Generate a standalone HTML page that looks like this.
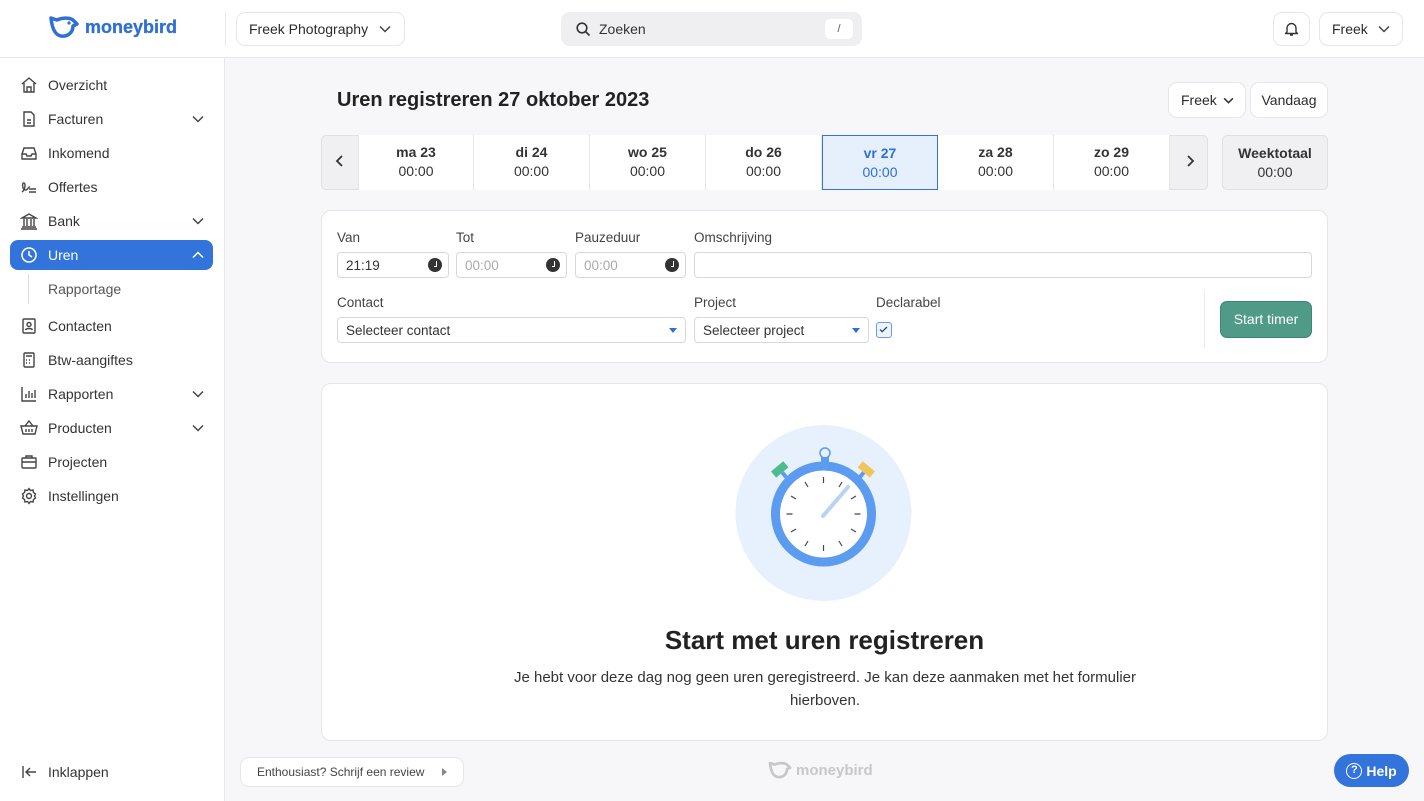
<!DOCTYPE html>
<html><head><meta charset="utf-8"><style>
*{box-sizing:border-box;margin:0;padding:0}
body{width:1424px;height:801px;overflow:hidden;font-family:"Liberation Sans",sans-serif;background:#f7f7f9;color:#2b2b2b;position:relative}
.a{position:absolute}
.hdr{left:0;top:0;width:1424px;height:58px;background:#fff;border-bottom:1px solid #e8e8ec}
.side{left:0;top:58px;width:225px;height:743px;background:#fff;border-right:1px solid #e8e8ec}
.btn{background:#fff;border:1px solid #e6e6ea;border-radius:9px;font-size:14px;display:flex;align-items:center}
.nav{left:10px;width:203px;height:30px;display:flex;align-items:center;font-size:14px;color:#333}
.nav svg{margin-left:10px;margin-right:10px}
.nav .ch{position:absolute;right:-1px}
.card{background:#fff;border:1px solid #e6e6ea;border-radius:10px}
.day{top:135px;height:55px;width:116px;background:#fff;border-right:1px solid #e6e6ea;text-align:center;font-size:14px;padding-top:9px;color:#333}
.day b{display:block;margin-bottom:3px}
.lbl{font-size:13.5px;color:#444}
.inp{height:26px;border:1px solid #d8d8dc;border-radius:4px;background:#fff;font-size:13.5px;padding:5px 8px;color:#333}
.ck{position:absolute;right:6px;top:5px;width:14px;height:14px;border-radius:50%;background:#333}
.ck:after{content:"";position:absolute;left:6px;top:3px;width:2px;height:5px;border-right:1.5px solid #fff;border-bottom:1.5px solid #fff}
.tri{position:absolute;right:8px;top:10px;width:0;height:0;border-left:4px solid transparent;border-right:4px solid transparent;border-top:5px solid #2f6fd6}
</style></head><body>
<div class="a hdr"></div>
<div class="a" style="left:49px;top:14px;display:flex;align-items:center">
<svg width="30" height="26" viewBox="0 0 30 26"><path d="M2 4 L8 6 C12 4 20 3 24 6 L28 10 L24 12 C24 19 18 23 12 22 C6 21 3 14 2 4Z" fill="none" stroke="#2f6fd6" stroke-width="3.5" stroke-linejoin="round"/><circle cx="20" cy="9" r="1.6" fill="#2f6fd6"/></svg>
<span style="color:#2f6fd6;font-weight:bold;font-size:18px;margin-left:6px;-webkit-text-stroke:.3px #2f6fd6">moneybird</span></div>
<div class="a" style="left:225px;top:12px;width:1px;height:34px;background:#e8e8ec"></div>
<div class="a btn" style="left:236px;top:12px;width:169px;height:34px;padding-left:12px">Freek Photography<svg style="position:absolute;right:13px" width="12" height="8" viewBox="0 0 12 8"><path d="M1 1.5l5 5 5-5" fill="none" stroke="#444" stroke-width="1.5"/></svg></div>
<div class="a" style="left:561px;top:12px;width:301px;height:34px;background:#efeff2;border-radius:9px;display:flex;align-items:center;font-size:14px;color:#333">
<svg style="margin:0 8px 0 15px" width="15" height="15" viewBox="0 0 15 15"><circle cx="6" cy="6" r="4.8" fill="none" stroke="#333" stroke-width="1.6"/><path d="M9.5 9.5l4 4" stroke="#333" stroke-width="1.6"/></svg>Zoeken
<span style="position:absolute;right:9px;top:7px;width:28px;height:20px;background:#fff;border-radius:5px;font-size:11px;text-align:center;line-height:20px;color:#555">/</span></div>
<div class="a btn" style="left:1273px;top:12px;width:37px;height:34px;justify-content:center"><svg width="15" height="16" viewBox="0 0 15 16"><path d="M3 11V7a4.5 4.5 0 019 0v4l1.5 1.5h-12z M6 14h3" fill="none" stroke="#333" stroke-width="1.4" stroke-linejoin="round"/></svg></div>
<div class="a btn" style="left:1319px;top:12px;width:84px;height:34px;padding-left:12px">Freek<svg style="position:absolute;right:12px" width="12" height="8" viewBox="0 0 12 8"><path d="M1 1.5l5 5 5-5" fill="none" stroke="#444" stroke-width="1.5"/></svg></div>

<div class="a side"></div>
<div class="a nav" style="top:70px"><svg width="18" height="18" viewBox="0 0 18 18" fill="none" stroke="#444" stroke-width="1.4"><path d="M2 8L9 2l7 6M4 7v9h10V7M7 16v-5h4v5"/></svg>Overzicht</div>
<div class="a nav" style="top:104px"><svg width="18" height="18" viewBox="0 0 18 18" fill="none" stroke="#444" stroke-width="1.4"><path d="M4 2h7l3 3v11H4zM7 10h4M7 13h4"/></svg>Facturen<svg class="ch" width="12" height="8" viewBox="0 0 12 8"><path d="M1 1.5l5 5 5-5" fill="none" stroke="#444" stroke-width="1.5"/></svg></div>
<div class="a nav" style="top:138px"><svg width="18" height="18" viewBox="0 0 18 18" fill="none" stroke="#444" stroke-width="1.4"><path d="M2 10l2-6h10l2 6v5H2zM2 10h4l1 2h4l1-2h4"/></svg>Inkomend</div>
<div class="a nav" style="top:172px"><svg width="18" height="18" viewBox="0 0 18 18" fill="none" stroke="#444" stroke-width="1.4"><path d="M2 14c3-2 4-8 2-9s-2 6 1 7 3-4 5-3M9 11h7M9 14h7"/></svg>Offertes</div>
<div class="a nav" style="top:206px"><svg width="18" height="18" viewBox="0 0 18 18" fill="none" stroke="#444" stroke-width="1.4"><path d="M2 6l7-4 7 4zM4 7v7M7 7v7M11 7v7M14 7v7M2 15h14M1 17h16"/></svg>Bank<svg class="ch" width="12" height="8" viewBox="0 0 12 8"><path d="M1 1.5l5 5 5-5" fill="none" stroke="#444" stroke-width="1.5"/></svg></div>
<div class="a nav" style="top:240px;background:#3273dc;border-radius:8px;color:#fff"><svg width="18" height="18" viewBox="0 0 18 18" fill="none" stroke="#fff" stroke-width="1.6"><circle cx="9" cy="9" r="7"/><path d="M9 5v4l3 2"/></svg>Uren<svg class="ch" width="12" height="8" viewBox="0 0 12 8"><path d="M1 6.5l5-5 5 5" fill="none" stroke="#fff" stroke-width="1.5"/></svg></div>
<div class="a" style="left:28px;top:274px;width:1px;height:30px;background:#ddd"></div>
<div class="a" style="left:48px;top:281px;font-size:14px;color:#555">Rapportage</div>
<div class="a nav" style="top:311px"><svg width="18" height="18" viewBox="0 0 18 18" fill="none" stroke="#444" stroke-width="1.4"><rect x="3" y="2" width="12" height="14" rx="1"/><circle cx="9" cy="7.5" r="2"/><path d="M5.5 13c1-2 6-2 7 0"/></svg>Contacten</div>
<div class="a nav" style="top:345px"><svg width="18" height="18" viewBox="0 0 18 18" fill="none" stroke="#444" stroke-width="1.4"><rect x="4" y="2" width="10" height="14" rx="1"/><path d="M6 5h6M6 9h1M9 9h1M6 12h1M9 12h1"/></svg>Btw-aangiftes</div>
<div class="a nav" style="top:379px"><svg width="18" height="18" viewBox="0 0 18 18" fill="none" stroke="#444" stroke-width="1.4"><path d="M2 2v14h14M6 13V9M9 13V6M12 13V8M15 13V5"/></svg>Rapporten<svg class="ch" width="12" height="8" viewBox="0 0 12 8"><path d="M1 1.5l5 5 5-5" fill="none" stroke="#444" stroke-width="1.5"/></svg></div>
<div class="a nav" style="top:413px"><svg width="18" height="18" viewBox="0 0 18 18" fill="none" stroke="#444" stroke-width="1.4"><path d="M1 7h16l-2 8H3zM5 7l4-5 4 5M6 10v3M9 10v3M12 10v3"/></svg>Producten<svg class="ch" width="12" height="8" viewBox="0 0 12 8"><path d="M1 1.5l5 5 5-5" fill="none" stroke="#444" stroke-width="1.5"/></svg></div>
<div class="a nav" style="top:447px"><svg width="18" height="18" viewBox="0 0 18 18" fill="none" stroke="#444" stroke-width="1.4"><rect x="2" y="5" width="14" height="10" rx="1"/><path d="M6 5V3h6v2M2 9h14"/></svg>Projecten</div>
<div class="a nav" style="top:481px"><svg width="18" height="18" viewBox="0 0 18 18" fill="none" stroke="#444" stroke-width="1.4"><circle cx="9" cy="9" r="2.5"/><path d="M9 1.5l1.5 2 2.5-.5.5 2.5 2 1.5-1 2 1 2-2 1.5-.5 2.5-2.5-.5L9 16.5l-1.5-2-2.5.5-.5-2.5-2-1.5 1-2-1-2 2-1.5.5-2.5 2.5.5z"/></svg>Instellingen</div>
<div class="a nav" style="top:757px"><svg width="18" height="18" viewBox="0 0 18 18" fill="none" stroke="#444" stroke-width="1.4"><path d="M3 3v12M16 9H6M10 5L6 9l4 4"/></svg>Inklappen</div>

<div class="a" style="left:337px;top:89px;font-size:20px;font-weight:bold;color:#222">Uren registreren 27 oktober 2023</div>
<div class="a btn" style="left:1168px;top:82px;width:78px;height:36px;padding-left:12px">Freek<svg style="position:absolute;right:11px" width="11" height="7" viewBox="0 0 12 8"><path d="M1 1.5l5 5 5-5" fill="none" stroke="#333" stroke-width="1.8"/></svg></div>
<div class="a btn" style="left:1250px;top:82px;width:78px;height:36px;justify-content:center">Vandaag</div>

<div class="a" style="left:321px;top:135px;width:887px;height:55px;border:1px solid #e0e0e4;border-radius:5px;overflow:hidden;background:#f0f0f3"></div>
<div class="a" style="left:334px;top:154px"><svg width="12" height="14" viewBox="0 0 12 14"><path d="M8 2L3 7l5 5" fill="none" stroke="#333" stroke-width="1.8"/></svg></div>
<div class="a" style="left:1184px;top:154px"><svg width="12" height="14" viewBox="0 0 12 14"><path d="M4 2l5 5-5 5" fill="none" stroke="#333" stroke-width="1.8"/></svg></div>
<div class="a day" style="left:358px;border-left:1px solid #e6e6ea"><b>ma 23</b>00:00</div>
<div class="a day" style="left:474px"><b>di 24</b>00:00</div>
<div class="a day" style="left:590px"><b>wo 25</b>00:00</div>
<div class="a day" style="left:706px"><b>do 26</b>00:00</div>
<div class="a day" style="left:822px;background:#e6f0fc;border:1px solid #3273dc;color:#2f6fd6"><b>vr 27</b>00:00</div>
<div class="a day" style="left:938px"><b>za 28</b>00:00</div>
<div class="a day" style="left:1054px"><b>zo 29</b>00:00</div>
<div class="a day" style="left:1222px;width:106px;background:#f0f0f3;border:1px solid #e0e0e4;border-radius:5px"><b>Weektotaal</b>00:00</div>

<div class="a card" style="left:321px;top:210px;width:1007px;height:153px"></div>
<div class="a lbl" style="left:337px;top:230px">Van</div>
<div class="a lbl" style="left:456px;top:230px">Tot</div>
<div class="a lbl" style="left:575px;top:230px">Pauzeduur</div>
<div class="a lbl" style="left:694px;top:230px">Omschrijving</div>
<div class="a inp" style="left:337px;top:252px;width:112px">21:19<span class="ck"></span></div>
<div class="a inp" style="left:456px;top:252px;width:111px;color:#aaa">00:00<span class="ck"></span></div>
<div class="a inp" style="left:575px;top:252px;width:111px;color:#aaa">00:00<span class="ck"></span></div>
<div class="a inp" style="left:694px;top:252px;width:618px"></div>
<div class="a lbl" style="left:337px;top:295px">Contact</div>
<div class="a lbl" style="left:694px;top:295px">Project</div>
<div class="a lbl" style="left:876px;top:295px">Declarabel</div>
<div class="a inp" style="left:337px;top:317px;width:349px">Selecteer contact<span class="tri"></span></div>
<div class="a inp" style="left:694px;top:317px;width:175px">Selecteer project<span class="tri"></span></div>
<div class="a" style="left:876px;top:322px;width:16px;height:16px;border:1.5px solid #6b9be6;border-radius:3px;background:#eef4fd"><svg width="13" height="13" viewBox="0 0 13 13" style="position:absolute;left:0;top:0"><path d="M3 6.5l2.2 2.2L10 4" fill="none" stroke="#2b4a7a" stroke-width="1.3"/></svg></div>
<div class="a" style="left:1204px;top:290px;width:1px;height:58px;background:#ececef"></div>
<div class="a" style="left:1220px;top:301px;width:92px;height:37px;background:#4f9b87;border:1px solid #3f8674;border-radius:7px;color:#fff;font-size:14px;text-align:center;line-height:35px">Start timer</div>

<div class="a card" style="left:321px;top:383px;width:1007px;height:358px"></div>
<svg class="a" style="left:735px;top:425px" width="177" height="176" viewBox="0 0 177 176">
<circle cx="88.5" cy="88" r="88" fill="#e6f1fd"/>
<circle cx="90" cy="28" r="5" fill="none" stroke="#5b9bf0" stroke-width="1.5"/>
<rect x="86" y="32" width="8" height="8" fill="#5b9bf0"/>
<g transform="rotate(-40 46 46)"><rect x="38" y="40" width="16" height="8" fill="#4cbb8e"/><rect x="44" y="48" width="4" height="6" fill="#5b9bf0"/></g>
<g transform="rotate(40 130 46)"><rect x="122" y="40" width="16" height="8" fill="#f2c45a"/><rect x="128" y="48" width="4" height="6" fill="#5b9bf0"/></g>
<circle cx="88.5" cy="89" r="48" fill="#fff" stroke="#5b9bf0" stroke-width="9"/>
<g stroke="#445" stroke-width="1.2">
<path d="M88.5 52v6M88.5 120v6M51.5 89h6M119.5 89h6M70 57l3 5M104 116l3 5M107 57l-3 5M73 116l-3 5M56 71l5 3M116 104l5 3M56 107l5-3M116 74l5-3"/></g>
<path d="M88 91L113 62" stroke="#b7d3f7" stroke-width="4" stroke-linecap="round"/>
</svg>
<div class="a" style="left:321px;top:625px;width:1007px;text-align:center;font-size:26px;font-weight:bold;color:#222">Start met uren registreren</div>
<div class="a" style="left:480px;top:666px;width:690px;text-align:center;font-size:15px;line-height:23px;color:#333">Je hebt voor deze dag nog geen uren geregistreerd. Je kan deze aanmaken met het formulier hierboven.</div>

<div class="a btn" style="left:240px;top:757px;width:224px;height:30px;padding-left:16px;font-size:12px;color:#444">Enthousiast? Schrijf een review<span style="position:absolute;right:16px;top:10px;border-top:4px solid transparent;border-bottom:4px solid transparent;border-left:5px solid #888"></span></div>
<div class="a" style="left:768px;top:760px;display:flex;align-items:center;opacity:.5">
<svg width="24" height="20" viewBox="0 0 30 26"><path d="M2 4 L8 6 C12 4 20 3 24 6 L28 10 L24 12 C24 19 18 23 12 22 C6 21 3 14 2 4Z" fill="none" stroke="#999" stroke-width="3.5" stroke-linejoin="round"/></svg>
<span style="color:#999;font-weight:bold;font-size:15px;margin-left:4px">moneybird</span></div>
<div class="a" style="left:1334px;top:754px;width:75px;height:33px;background:#3273dc;border-radius:17px;color:#fff;font-size:14px;font-weight:bold;display:flex;align-items:center;justify-content:center;gap:4px"><span style="width:16px;height:16px;border:1.6px solid #fff;border-radius:50%;font-size:11px;text-align:center;line-height:13px">?</span>Help</div>
</body></html>
